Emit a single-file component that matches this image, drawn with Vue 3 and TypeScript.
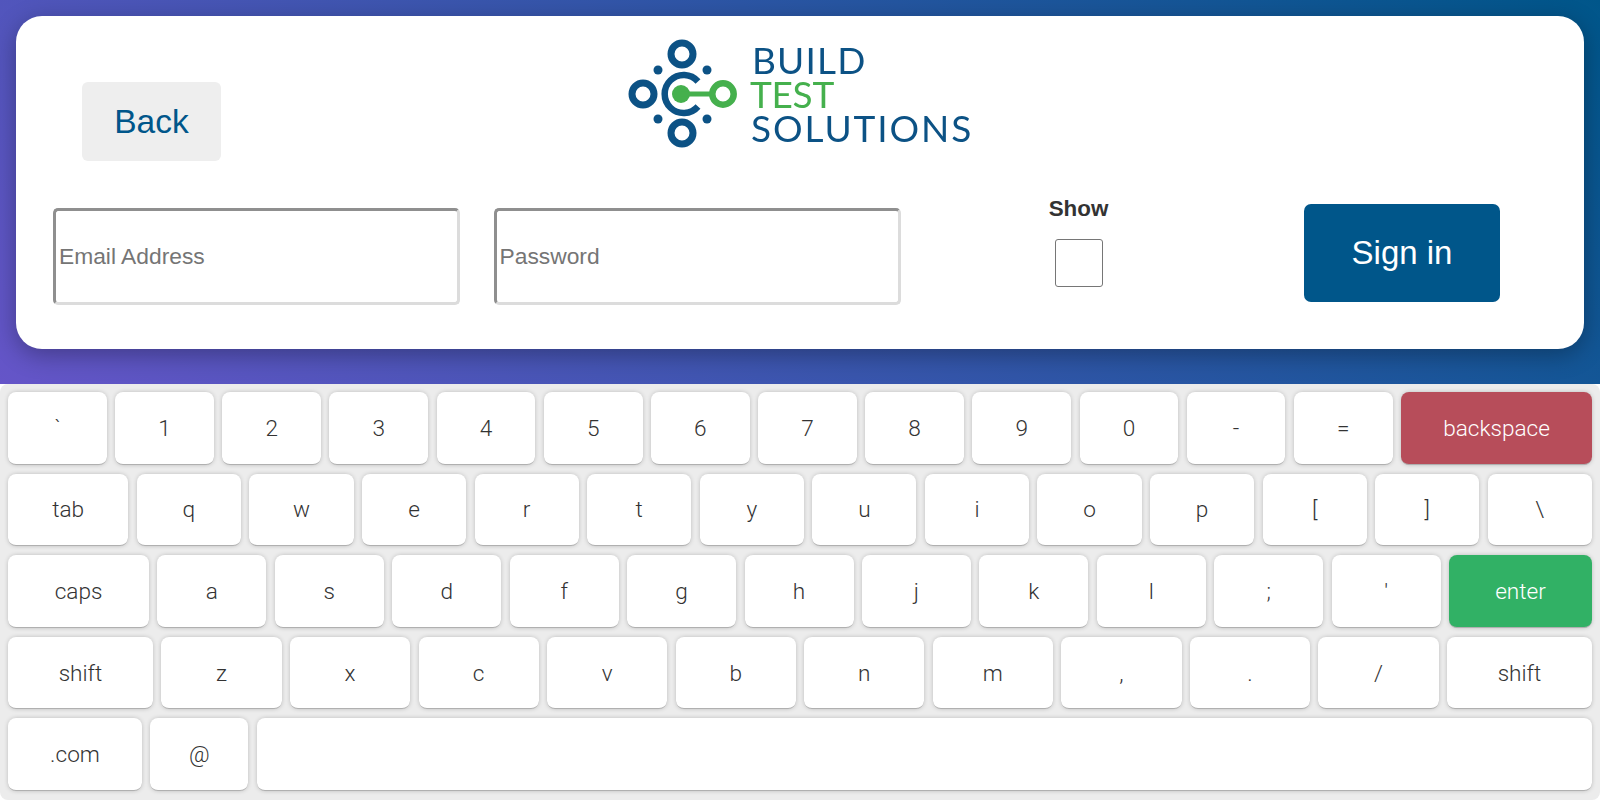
<template>
  <div class="page">
    <section class="hero">
      <div class="card">
        <header class="card-top">
          <button class="back">Back</button>
          <div class="logo">
            <svg class="mark" viewBox="620 30 120 125" width="120" height="125">
              <g fill="none" stroke="#0c5285">
                <circle cx="682" cy="54" r="11" stroke-width="7" />
                <circle cx="643" cy="94" r="11" stroke-width="7" />
                <circle cx="682" cy="133" r="11" stroke-width="7" />
                <path d="M698 81.5A19 19 0 1 0 698 106.5" stroke-width="6.5" />
              </g>
              <g fill="#0c5285">
                <circle cx="658" cy="70" r="4.5" />
                <circle cx="707" cy="70" r="4.5" />
                <circle cx="658" cy="119" r="4.5" />
                <circle cx="707" cy="119" r="4.5" />
              </g>
              <g fill="#45b04d">
                <circle cx="681" cy="94" r="9" />
                <rect x="681" y="91.5" width="32" height="5" />
              </g>
              <circle cx="723" cy="94" r="10.7" fill="none" stroke="#45b04d" stroke-width="6.5" />
            </svg>
            <div class="words">
              <div class="word build">BUILD</div>
              <div class="word test">TEST</div>
              <div class="word solutions">SOLUTIONS</div>
            </div>
          </div>
        </header>
        <form class="login" @submit.prevent>
          <input class="field" type="text" placeholder="Email Address" />
          <input class="field" type="password" placeholder="Password" />
          <label class="show">
            <span>Show</span>
            <input type="checkbox" v-model="showPassword" />
          </label>
          <button class="signin" type="submit">Sign in</button>
        </form>
      </div>
    </section>

    <section class="keyboard">
      <div v-for="(row, i) in rows" :key="i" class="key-row">
        <button v-for="(k, j) in row" :key="j" class="key" :class="k.cls">{{ k.label }}</button>
      </div>
    </section>
  </div>
</template>

<script setup lang="ts">
import { ref } from 'vue'

interface Key {
  label: string
  cls?: string
}

const showPassword = ref(false)

function keys(text: string): Key[] {
  return text.split(' ').map((label) => ({ label }))
}

const rows: Key[][] = [
  [...keys('` 1 2 3 4 5 6 7 8 9 0 - ='), { label: 'backspace', cls: 'backspace' }],
  [{ label: 'tab', cls: 'tab' }, ...keys('q w e r t y u i o p [ ] \\')],
  [{ label: 'caps', cls: 'caps' }, ...keys("a s d f g h j k l ; '"), { label: 'enter', cls: 'enter' }],
  [{ label: 'shift', cls: 'shift' }, ...keys('z x c v b n m , . /'), { label: 'shift', cls: 'shift' }],
  [{ label: '.com', cls: 'com' }, { label: '@', cls: 'at' }, { label: '', cls: 'space' }],
]
</script>

<style scoped>
.page {
  display: flex;
  flex-direction: column;
  height: 800px;
  overflow: hidden;
  font-family: 'Liberation Sans', Arial, sans-serif;
}

.hero {
  flex: 1;
  display: flex;
  padding: 16px 16px 35px;
  background: linear-gradient(45deg, #6555c8, #00568a);
}

.card {
  flex: 1;
  background: #fff;
  border-radius: 26px;
  box-shadow: 0 6px 24px rgba(0, 0, 0, 0.3);
}

.card-top {
  display: flex;
  align-items: flex-start;
  height: 123px;
  margin-top: 22px;
  padding-left: 66px;
}

.back {
  align-self: flex-end;
  width: 139px;
  height: 79px;
  padding-top: 2px;
  border: none;
  border-radius: 6px;
  background: #eee;
  color: #00568a;
  font: 33.5px 'Liberation Sans', Arial, sans-serif;
}

.logo {
  display: flex;
  align-items: flex-start;
  margin-left: 399px;
  margin-top: -8px;
  filter: blur(0.5px);
}

.words {
  margin-top: 13px;
  margin-left: 11px;
}

.word {
  height: 34px;
  color: #0c5285;
  font-family: Lato, sans-serif;
  font-size: 37px;
  line-height: 34px;
  white-space: nowrap;
}

.build {
  margin-left: 1px;
  letter-spacing: 1.2px;
}

.test {
  margin-left: -1px;
  color: #45b04d;
  letter-spacing: -0.3px;
}

.solutions {
  letter-spacing: 1.9px;
}

.login {
  display: flex;
  align-items: flex-start;
  gap: 33.5px;
  margin-top: 34px;
  padding: 0 84px 0 37px;
}

.field {
  box-sizing: border-box;
  width: 407px;
  height: 97px;
  margin-top: 13px;
  padding: 0 3px;
  border: 3px solid;
  border-color: #8f8f8f #dcdcdc #dcdcdc #8f8f8f;
  border-radius: 5px;
  font: 22.8px 'Liberation Sans', Arial, sans-serif;
  outline: none;
}

.field::placeholder {
  color: #757575;
}

.show {
  display: flex;
  flex-direction: column;
  align-items: center;
  width: 289px;
  padding-top: 1px;
  color: #333;
  font-size: 22.4px;
  font-weight: 700;
  line-height: 26px;
}

.show input {
  appearance: none;
  width: 48px;
  height: 48px;
  margin: 17px 0 0;
  border: 1px solid #767676;
  border-radius: 3px;
  background: #fff;
}

.signin {
  width: 196px;
  height: 98px;
  margin-top: 9px;
  margin-left: auto;
  border: none;
  border-radius: 7px;
  background: #00568a;
  color: #fff;
  font: 33px 'Liberation Sans', Arial, sans-serif;
}

.keyboard {
  display: flex;
  flex-direction: column;
  gap: 9px;
  box-sizing: border-box;
  height: 416px;
  padding: 8px;
  background: #ececec;
  border-radius: 8px;
}

.key-row {
  display: flex;
  gap: 8.4px;
}

.key {
  flex: 1 1 0;
  min-width: 0;
  height: 72.6px;
  padding: 1px 0 0;
  border: none;
  border-bottom: 1.5px solid #b0b0b0;
  border-radius: 8px;
  background: #fff;
  box-shadow: 0 0 5px -1px rgba(0, 0, 0, 0.3);
  color: #333;
  font-family: Roboto, 'Liberation Sans', sans-serif;
  font-size: 22.6px;
  font-weight: 300;
}

.backspace {
  flex: 0 0 191px;
  background: #b74d5a;
  color: #fff;
}

.enter {
  flex: 0 0 143px;
  background: #31b165;
  color: #fff;
}

.tab {
  flex: 0 0 120.4px;
}

.caps {
  flex: 0 0 141px;
}

.shift {
  flex: 0 0 145px;
}

.com {
  flex: 0 0 134px;
}

.at {
  flex: 0 0 98px;
}

.space {
  flex: 1 1 0;
}
</style>

<style>
body {
  margin: 0;
}
</style>
